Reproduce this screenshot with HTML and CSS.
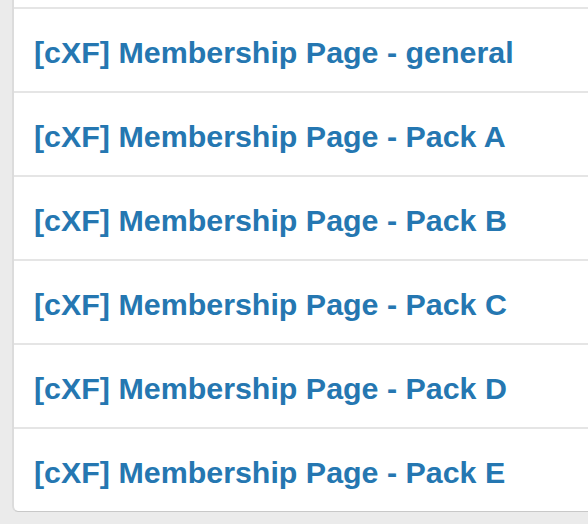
FILE: index.html
```html
<!DOCTYPE html>
<html lang="en">
<head>
    <meta charset="UTF-8">
    <title>Membership Pages</title>
    <link rel="stylesheet" href="styles.css">
</head>
<body>
    <div class="panel">
        <div class="panel-top"></div>
        <a class="row" href="#">[cXF] Membership Page - general</a>
        <a class="row" href="#">[cXF] Membership Page - Pack A</a>
        <a class="row" href="#">[cXF] Membership Page - Pack B</a>
        <a class="row" href="#">[cXF] Membership Page - Pack C</a>
        <a class="row" href="#">[cXF] Membership Page - Pack D</a>
        <a class="row" href="#">[cXF] Membership Page - Pack E</a>
    </div>
</body>
</html>
```

FILE: styles.css
```css
* {
    margin: 0;
    padding: 0;
    box-sizing: border-box;
}
body {
    font-family: 'Liberation Sans', Arial, sans-serif;
    background: #ebebeb;
    height: 524px;
    overflow: hidden;
}

/* Panel */
.panel {
    margin-left: 12px;
    background: #fff;
    border-left: 2px solid #dcdcdc;
    border-bottom: 1px solid #c8c8c8;
    border-bottom-left-radius: 6px;
}
.panel-top {
    height: 7px;
}
.row {
    display: flex;
    align-items: center;
    height: 84px;
    padding: 4px 0 0 20px;
    border-top: 2px solid #e5e5e5;
    color: #2577b1;
    font-size: 30.4px;
    font-weight: bold;
    text-decoration: none;
}
```
